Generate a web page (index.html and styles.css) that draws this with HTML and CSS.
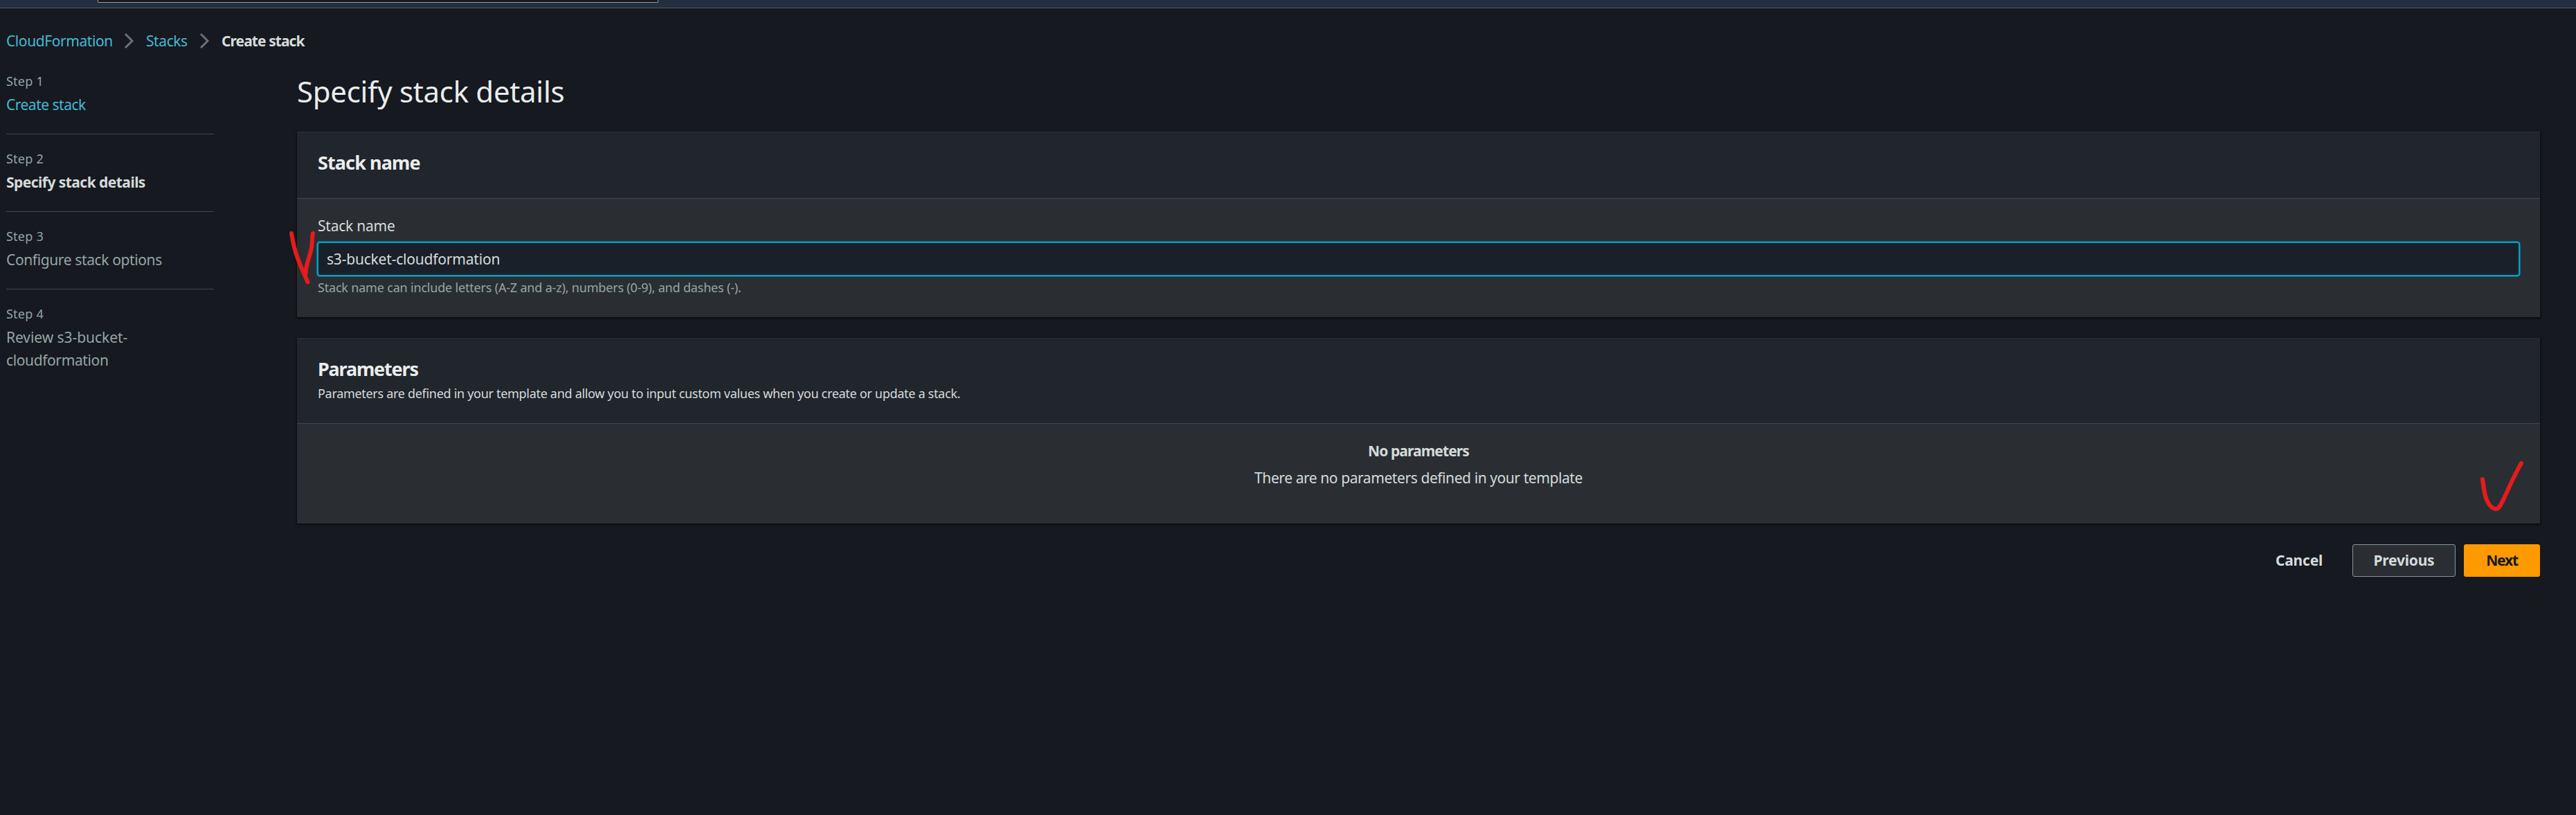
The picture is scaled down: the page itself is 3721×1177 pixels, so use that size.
FILE: index.html
```html
<!DOCTYPE html>
<html lang="en">
<head>
<meta charset="utf-8">
<title>CloudFormation - Create stack</title>
<link rel="stylesheet" href="styles.css">
</head>
<body>
<header class="topbar"><div class="topbar-search"></div></header>

<nav class="breadcrumb" aria-label="Breadcrumb">
  <a class="crumb crumb-service" href="#">CloudFormation</a>
  <svg class="chevron" width="15" height="24" viewBox="0 0 15 24"><path d="M2 2l10 10L2 22"/></svg>
  <a class="crumb crumb-stacks" href="#">Stacks</a>
  <svg class="chevron" width="15" height="24" viewBox="0 0 15 24"><path d="M2 2l10 10L2 22"/></svg>
  <span class="crumb crumb-current">Create stack</span>
</nav>

<div class="layout">
  <aside class="steps">
    <div class="step">
      <div class="step-number">Step 1</div>
      <a class="step-title step-link" href="#">Create stack</a>
    </div>
    <div class="step">
      <div class="step-number">Step 2</div>
      <div class="step-title step-active">Specify stack details</div>
    </div>
    <div class="step">
      <div class="step-number">Step 3</div>
      <div class="step-title">Configure stack options</div>
    </div>
    <div class="step">
      <div class="step-number">Step 4</div>
      <div class="step-title"><span class="step-review">Review s3-bucket-</span><br>cloudformation</div>
    </div>
  </aside>

  <main class="content">
    <h1 class="page-title">Specify stack details</h1>

    <section class="card">
      <div class="card-header"><h2 class="card-title">Stack name</h2></div>
      <div class="card-body">
        <label class="label" for="stack-name">Stack name</label>
        <input class="input" id="stack-name" type="text" value="s3-bucket-cloudformation">
        <p class="hint">Stack name can include letters (A-Z and a-z), numbers (0-9), and dashes (-).</p>
      </div>
      <svg class="mark mark-name" width="40" height="84" viewBox="0 0 40 84"><path d="M6 6C8 19 11 31 15 42C19 54 25 65 29.5 76.500M37 6C35 14 37 21 34 31C31 44 27 50 26 67"/></svg>
    </section>

    <section class="card">
      <div class="card-header card-header-described">
        <h2 class="card-title card-title-parameters">Parameters</h2>
        <p class="description">Parameters are defined in your template and allow you to input custom values when you create or update a stack.</p>
      </div>
      <div class="card-body empty">
        <div class="empty-title">No parameters</div>
        <div class="empty-text">There are no parameters defined in your template</div>
      </div>
      <svg class="mark mark-next" width="68" height="78" viewBox="0 0 68 78"><path d="M6 29C8 44 9 54 13 61C17 69 22 72 25.500 72C31 72 34 62 41 48C49 31 52 23 62 6"/></svg>
    </section>

    <div class="actions">
      <button class="button button-link">Cancel</button>
      <button class="button button-normal">Previous</button>
      <button class="button button-primary">Next</button>
    </div>
  </main>
</div>
</body>
</html>
```
FILE: styles.css
```css
* { box-sizing: border-box; }

body {
  margin: 0;
  min-height: 1177px;
  background: #16191f;
  color: #d5dbdb;
  font: 21px/33px "Noto Sans", "Open Sans", sans-serif;
  letter-spacing: -0.42px;
}

h1, h2, p { margin: 0; }
a { color: #44b9d6; text-decoration: none; }

.topbar {
  height: 12px;
  padding-left: 141px;
  background: #232f3e;
  border-bottom: 1px solid #545b64;
}

.topbar-search {
  width: 810px;
  height: 4px;
  background: #16191f;
  border: 1px solid #95999d;
  border-top: 0;
  border-radius: 0 0 2px 2px;
}

.breadcrumb {
  display: flex;
  align-items: center;
  height: 36px;
  margin: 29px 0 27px 9px;
}

.crumb-service { width: 170px; }
.crumb-stacks { width: 77px; }
.crumb-current { font-weight: 700; letter-spacing: -0.93px; }

.chevron {
  flex: none;
  margin-right: 17px;
  fill: none;
  stroke: #687078;
  stroke-width: 3;
}

.layout {
  display: grid;
  grid-template-columns: 300px 1fr;
  column-gap: 120px;
  padding: 0 52px 0 9px;
}

.step {
  padding-bottom: 25px;
  margin-bottom: 22px;
  border-bottom: 1px solid #414750;
  color: #95a5a6;
}
.step:last-child { border-bottom: 0; }
.step-number { margin-bottom: 4px; font-size: 18px; line-height: 27px; letter-spacing: 0.22px; }
.step-title { display: block; letter-spacing: -0.38px; }
.step-link { letter-spacing: -0.5px; }
.step-active { color: #d5dbdb; font-weight: 700; letter-spacing: -0.54px; }
.step-review { letter-spacing: -0.06px; }

.page-title {
  padding-top: 1px;
  margin-bottom: 31px;
  color: #eaeded;
  font-size: 42px;
  font-weight: 400;
  line-height: 54px;
  letter-spacing: -0.31px;
}

.card {
  position: relative;
  height: 268px;
  margin-bottom: 30px;
  background: #2a2e33;
  border-top: 1px solid #2d3135;
  box-shadow: 0 1px 2px 1px rgba(0, 0, 0, 0.5);
}

.card-header {
  height: 96px;
  padding: 26px 30px 0;
  background: #21252c;
  border-bottom: 1px solid #414750;
}
.card-header-described { height: 123px; }

.card-title {
  color: #eaeded;
  font-size: 27px;
  line-height: 36px;
  letter-spacing: -0.89px;
}
.card-title-parameters { letter-spacing: -1.17px; }

.description {
  margin-top: 4px;
  font-size: 18px;
  line-height: 27px;
  letter-spacing: -0.303px;
}

.card-body { padding: 23px 30px 0; }
.label { display: block; margin-bottom: 7px; letter-spacing: -0.23px; }

.input {
  display: block;
  width: 100%;
  height: 48px;
  padding: 0 12px;
  background: #1a2029;
  border: 1px solid #00a1c9;
  border-radius: 3px;
  outline: none;
  box-shadow: 0 0 0 1.5px #00a1c9;
  color: #d5dbdb;
  font: inherit;
  letter-spacing: -0.2px;
}

.hint {
  margin-top: 4px;
  color: #95a5a6;
  font-size: 18px;
  line-height: 27px;
  letter-spacing: -0.189px;
}

.empty { text-align: center; }
.empty-title { margin-bottom: 6px; font-weight: 700; letter-spacing: -0.9px; }

.actions { display: flex; justify-content: flex-end; }

.button {
  height: 47px;
  padding: 0;
  border: 1px solid transparent;
  border-radius: 3px;
  font: 700 21px/33px "Noto Sans", "Open Sans", sans-serif;
  letter-spacing: -0.23px;
}
.button-link { width: 128px; margin-right: 13px; background: none; color: #d5dbdb; }
.button-normal { width: 149px; margin-right: 12px; background: #2a2e33; border-color: #879596; color: #d5dbdb; }
.button-primary { width: 110px; background: #ff9900; color: #16191f; letter-spacing: -1.2px; }

/* Hand-drawn annotation strokes over the cards */
.mark {
  position: absolute;
  fill: none;
  stroke: #e81b1b;
  stroke-width: 6;
  stroke-linecap: round;
  stroke-linejoin: round;
}
.mark-name { left: -14px; top: 140px; }
.mark-next { right: 21px; top: 174px; }
```
